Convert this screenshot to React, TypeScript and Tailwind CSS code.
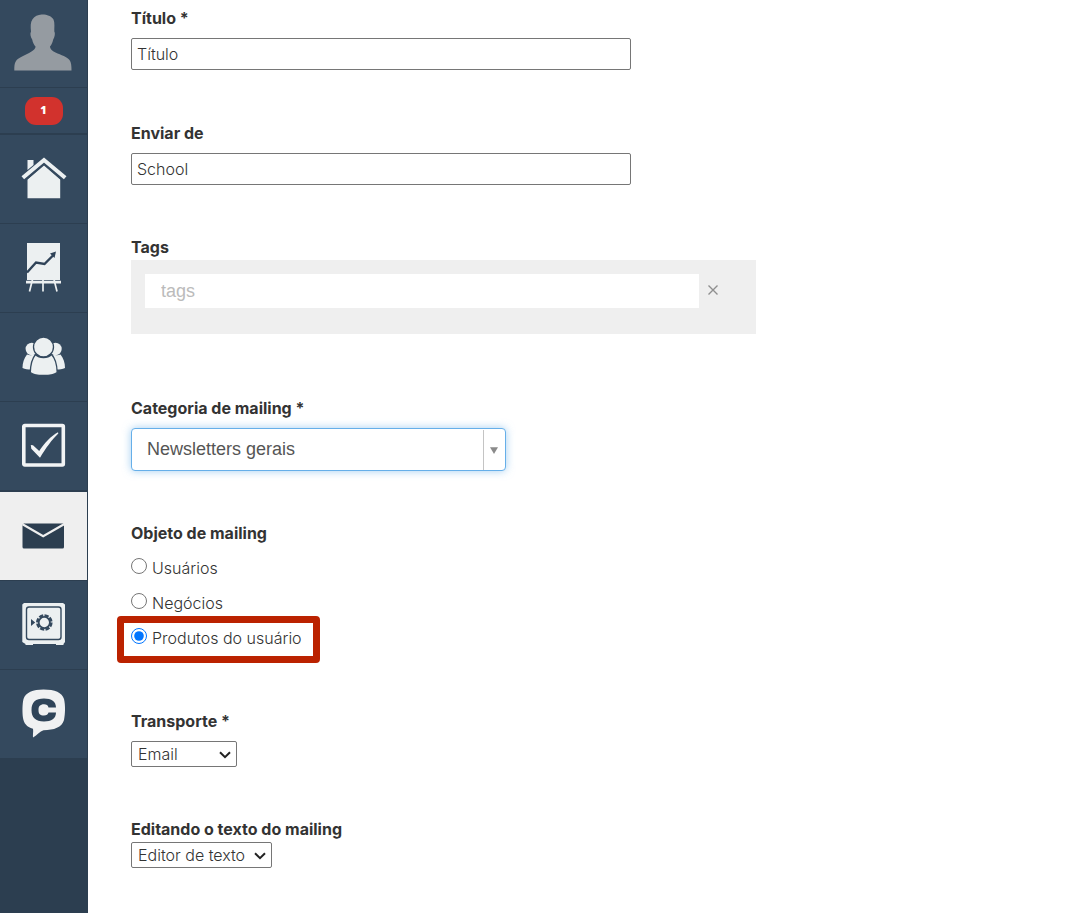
import { useState } from "react";
import type { ReactNode } from "react";

const LIGHT = "#ecf0f1";
const DARK = "#34495e";

function AvatarIcon() {
  return (
    <svg width="58" height="57" viewBox="0 0 58 57" aria-hidden="true">
      <path
        fill="#959ba1"
        d="M27.500 .5C32 .2 37 1.500 39.500 5.500C41 9 40.200 14 40.300 17.500C41.400 19 40.800 23 39.200 25.500C38.500 28.500 37.500 31 36 32.500C35.800 34.500 38 37 41.500 38.500C47 41 53.500 43 55.500 46C57.300 48.500 57.500 52 57.500 56.500H.3C.3 52.500 .3 49.500 2 47C4 44 10.500 41.500 15.500 38.800C19 37 21.700 34.500 21.500 32.500C20 31 18.800 28.500 18.200 25.500C16.500 23 15.800 19.500 17 17.500C16.500 12.500 16.300 8.500 18.500 5.200C20.500 2.300 24 .8 27.500 .5Z"
      />
    </svg>
  );
}

function HomeIcon() {
  return (
    <svg width="46" height="42" viewBox="0 0 46 42" fill={LIGHT} aria-hidden="true">
      <path d="M6.500 3h6v5l-6 5z" />
      <path d="M6.500 22.500L23 8.500L39.200 22.500V41.200H6.500z" />
      <path d="M3.500 24L23 7L42.500 24" fill="none" stroke={DARK} strokeWidth="1.500" />
      <path d="M1.800 20.800L23 3L44.200 20.800" fill="none" stroke={LIGHT} strokeWidth="4" strokeLinejoin="miter" />
    </svg>
  );
}

function ChartIcon() {
  return (
    <svg width="36" height="50" viewBox="0 0 36 50" aria-hidden="true">
      <path fill={LIGHT} d="M1 1H34v37H1z" />
      <path fill="none" stroke="#2f4358" strokeWidth="2.400" d="M1 30.500L10 20.500L18.500 22L27 13.500" />
      <path fill="#2f4358" d="M30 9.500L24 11.500L28.500 16z" />
      <path fill={LIGHT} d="M0 38.800H35V41.500H0z" />
      <path fill="none" stroke={LIGHT} strokeWidth="1.700" d="M6.500 37.500L3.500 49.500M17 37.500V49.500M28 37.500L31 49.500" />
    </svg>
  );
}

function UsersIcon() {
  return (
    <svg width="44" height="39" viewBox="0 0 44 39" fill={LIGHT} aria-hidden="true">
      <circle cx="9.800" cy="12" r="6.200" />
      <circle cx="33.500" cy="12" r="6.200" />
      <path d="M5 17.500C7 18.500 10 18.500 12.500 17.500L9 32.500C6 32.500 3 32 .5 31C.5 26 2 21 5 17.500Z" />
      <path d="M38.500 17.500C36.500 18.500 33.500 18.500 31 17.500L34.500 32.500C37.500 32.500 40.500 32 43 31C43 26 41.500 21 38.500 17.500Z" />
      <path
        stroke={DARK}
        strokeWidth="1.300"
        d="M13.500 17.500C17.500 21.500 25.500 21.500 29.500 17.500C33 21 35 28 35.200 35.500C30 39.500 13 39.500 8.300 35.500C8.500 28 10.500 21 13.500 17.500Z"
      />
      <circle cx="21.500" cy="10" r="10" stroke={DARK} strokeWidth="1.300" />
    </svg>
  );
}

function CheckIcon() {
  return (
    <svg width="44" height="44" viewBox="0 0 44 44" aria-hidden="true">
      <rect x="1.800" y="2.500" width="39.500" height="39.500" rx="1" fill="none" stroke="#f2f4f5" strokeWidth="3.600" />
      <path fill="#f2f4f5" d="M8.800 22L11 22.200L17.200 28C22 20.500 29 13 36 9.300L36.300 10.500C30 16.500 23.500 25.500 18 34.700L9.300 25.700z" />
    </svg>
  );
}

function MailIcon() {
  return (
    <svg width="43" height="26" viewBox="0 0 43 26" aria-hidden="true">
      <rect x=".5" y=".5" width="41.500" height="25" rx="1.500" fill="#2c3e50" />
      <path d="M.5 1.200L21.200 13.200L42 1.200" fill="none" stroke="#efefef" strokeWidth="2.200" />
    </svg>
  );
}

function SafeIcon() {
  return (
    <svg width="44" height="43" viewBox="0 0 44 43" aria-hidden="true">
      <path fill={LIGHT} d="M2 0H41L43 1.500V39L41.500 41V42H34V41H11V42H3.500V41L.3 39V1.500z" />
      <rect x="4.500" y="4" width="34.500" height="32.500" rx="2.500" fill="none" stroke={DARK} strokeWidth="1.400" />
      <path fill={DARK} d="M9 16L13.200 19.500L9 23z" />
      <circle cx="22.300" cy="19.500" r="5.600" fill="none" stroke={DARK} strokeWidth="1.800" />
      <circle cx="22.300" cy="19.500" r="7" fill="none" stroke={DARK} strokeWidth="2.600" strokeDasharray="4.200 1.298" />
    </svg>
  );
}

function ChatIcon() {
  return (
    <svg width="44" height="49" viewBox="0 0 44 49" aria-hidden="true">
      <path
        fill="#f0f1f2"
        d="M21.500 .5C33 .5 40 3.500 42 10C43.500 16 43.300 25 42 31C40 38.500 32 41 21.500 41.300C18 42.500 14.500 46.500 11 48.500C10.700 46 11.500 42.500 11 39.800C4.500 38 1.800 34 1 29C.2 23 .3 15 1.500 10C3.500 3.500 11 .5 21.500 .5Z"
      />
      <path
        fill="#2f4459"
        d="M34 18.500H26.500C26 16 24.500 15.300 22 15.300C18 15.300 16.500 17.500 16.500 21C16.500 24.800 18 26.500 22 26.500C24.500 26.500 26 25.500 26.500 23.500H34C34 29.500 29.500 32.500 22 32.500C13.500 32.500 9.500 28.500 9.500 21C9.500 13.200 13.500 9.500 22 9.500C29.500 9.500 34 12.500 34 18.500Z"
      />
    </svg>
  );
}

function Chevron() {
  return (
    <svg
      className="pointer-events-none absolute right-1.5 top-[10px]"
      width="12"
      height="8"
      viewBox="0 0 12 8"
      aria-hidden="true"
    >
      <path d="M1 1.200L6 6.200L11 1.200" fill="none" stroke="#222" strokeWidth="2" />
    </svg>
  );
}

function NavLink({ label, active, children }: { label: string; active?: boolean; children: ReactNode }) {
  return (
    <a
      href="#"
      aria-label={label}
      className={
        active
          ? "flex h-[89px] items-center justify-center border-b border-[#2c3e50] bg-[#efefef]"
          : "flex h-[89px] items-center justify-center border-b border-[#2c3e50] bg-[#34495e] pb-0.5"
      }
    >
      {children}
    </a>
  );
}

const labelClass = "block h-6 text-base font-bold leading-6 text-[#333]";
const inputClass =
  "mt-2 block h-8 w-full max-w-[500px] rounded-[2px] border border-[#767676] bg-white px-[5px] text-base font-light text-[#333] outline-none";
const selectClass =
  "h-[26px] w-full appearance-none rounded-[2px] border border-[#767676] bg-white pb-0.5 pl-[6px] text-base font-light leading-6 text-[#333] outline-none";

const targets = ["Usuários", "Negócios", "Produtos do usuário"];

export default function App() {
  const [target, setTarget] = useState("Produtos do usuário");

  return (
    <div className="flex min-h-screen bg-white font-['Inter',sans-serif]">
      <nav className="w-22 shrink-0 border-r border-[#2c3e50] bg-[#2c3e50]">
        <a
          href="#"
          aria-label="Perfil"
          className="flex h-22 items-center justify-center border-b border-[#2c3e50] bg-[#34495e] pb-0.5 pr-px"
        >
          <AvatarIcon />
        </a>
        <a
          href="#"
          aria-label="Notificações"
          className="flex h-[47px] items-center justify-center border-b-2 border-[#2c3e50] bg-[#34495e]"
        >
          <span className="flex h-7 w-[38px] items-center justify-center rounded-[11px] bg-[#d2322d] font-['Open_Sans',sans-serif] text-[11px] font-extrabold text-white">
            1
          </span>
        </a>
        <NavLink label="Início"><HomeIcon /></NavLink>
        <NavLink label="Estatísticas"><ChartIcon /></NavLink>
        <NavLink label="Usuários"><UsersIcon /></NavLink>
        <NavLink label="Tarefas"><CheckIcon /></NavLink>
        <div className="border-t border-[#2c3e50]">
          <NavLink label="Mensagens" active><MailIcon /></NavLink>
        </div>
        <NavLink label="Cofre"><SafeIcon /></NavLink>
        <NavLink label="Chat"><ChatIcon /></NavLink>
      </nav>

      <main className="min-w-0 flex-1 pl-[43px] pr-6 pt-1.5">
        <form onSubmit={(e) => e.preventDefault()}>
          <div>
            <label htmlFor="titulo" className={labelClass}>Título *</label>
            <input id="titulo" type="text" defaultValue="Título" className={inputClass} />
          </div>

          <div className="mt-[51px]">
            <label htmlFor="enviar" className={labelClass}>Enviar de</label>
            <input id="enviar" type="text" defaultValue="School" className={inputClass} />
          </div>

          <div className="mt-[50px]">
            <label htmlFor="tags" className={labelClass}>Tags</label>
            <div className="mt-px flex h-[74px] max-w-[625px] items-start bg-[#efefef] pl-3.5 pr-[37px] pt-3.5">
              <input
                id="tags"
                type="text"
                placeholder="tags"
                className="h-[34px] min-w-0 flex-1 bg-white px-4 font-['Liberation_Sans',sans-serif] text-lg text-[#555] outline-none placeholder:text-[#bbb]"
              />
              <button type="button" aria-label="Remover" className="ml-2 mt-2.5 flex h-3 w-3 items-center justify-center">
                <svg width="12" height="12" viewBox="0 0 12 12" aria-hidden="true">
                  <path d="M1.500 1.500L10.500 10.500M10.500 1.500L1.500 10.500" stroke="#8f8f8f" strokeWidth="1.400" />
                </svg>
              </button>
            </div>
          </div>

          <div className="mt-[62px]">
            <label htmlFor="categoria" className={labelClass}>Categoria de mailing *</label>
            <div className="relative mt-2 max-w-[375px]">
              <select
                id="categoria"
                className="block h-[43px] w-full appearance-none rounded border border-[#66afe9] bg-white pb-0.5 pl-[15px] pr-8 font-['Liberation_Sans',sans-serif] text-lg text-[#555] shadow-[0_0_8px_rgba(102,175,233,0.6)] outline-none"
              >
                <option>Newsletters gerais</option>
              </select>
              <span className="pointer-events-none absolute bottom-px right-px top-0.5 flex w-[22px] items-center justify-center border-l border-[#c4c4c4] pr-0.5">
                <svg width="8" height="7" viewBox="0 0 8 7" aria-hidden="true">
                  <path d="M0 .3H8L4 7z" fill="#8a8a8a" />
                </svg>
              </span>
            </div>
          </div>

          <fieldset className="mt-[50px]">
            <legend className={labelClass}>Objeto de mailing</legend>
            <div className="mt-[5px] flex flex-col items-start">
              {targets.map((name) => (
                <label key={name} className="relative flex h-[35px] items-center text-base font-light text-[#333]">
                  <input
                    type="radio"
                    name="objeto"
                    checked={target === name}
                    onChange={() => setTarget(name)}
                    className="mb-1 mr-[5px] h-4 w-4 accent-[#0075ff]"
                  />
                  {name}
                  {name === "Produtos do usuário" && (
                    <span className="pointer-events-none absolute -bottom-2 -left-3.5 -right-[18px] -top-1 rounded border-[7px] border-[#bb2200]" />
                  )}
                </label>
              ))}
            </div>
          </fieldset>

          <div className="mt-[54px]">
            <label htmlFor="transporte" className={labelClass}>Transporte *</label>
            <div className="relative mt-2 w-[106px]">
              <select id="transporte" className={selectClass}>
                <option>Email</option>
              </select>
              <Chevron />
            </div>
          </div>

          <div className="mt-[50px]">
            <label htmlFor="editor" className={labelClass}>Editando o texto do mailing</label>
            <div className="relative mt-px w-[141px]">
              <select id="editor" className={selectClass}>
                <option>Editor de texto</option>
              </select>
              <Chevron />
            </div>
          </div>
        </form>
      </main>
    </div>
  );
}
